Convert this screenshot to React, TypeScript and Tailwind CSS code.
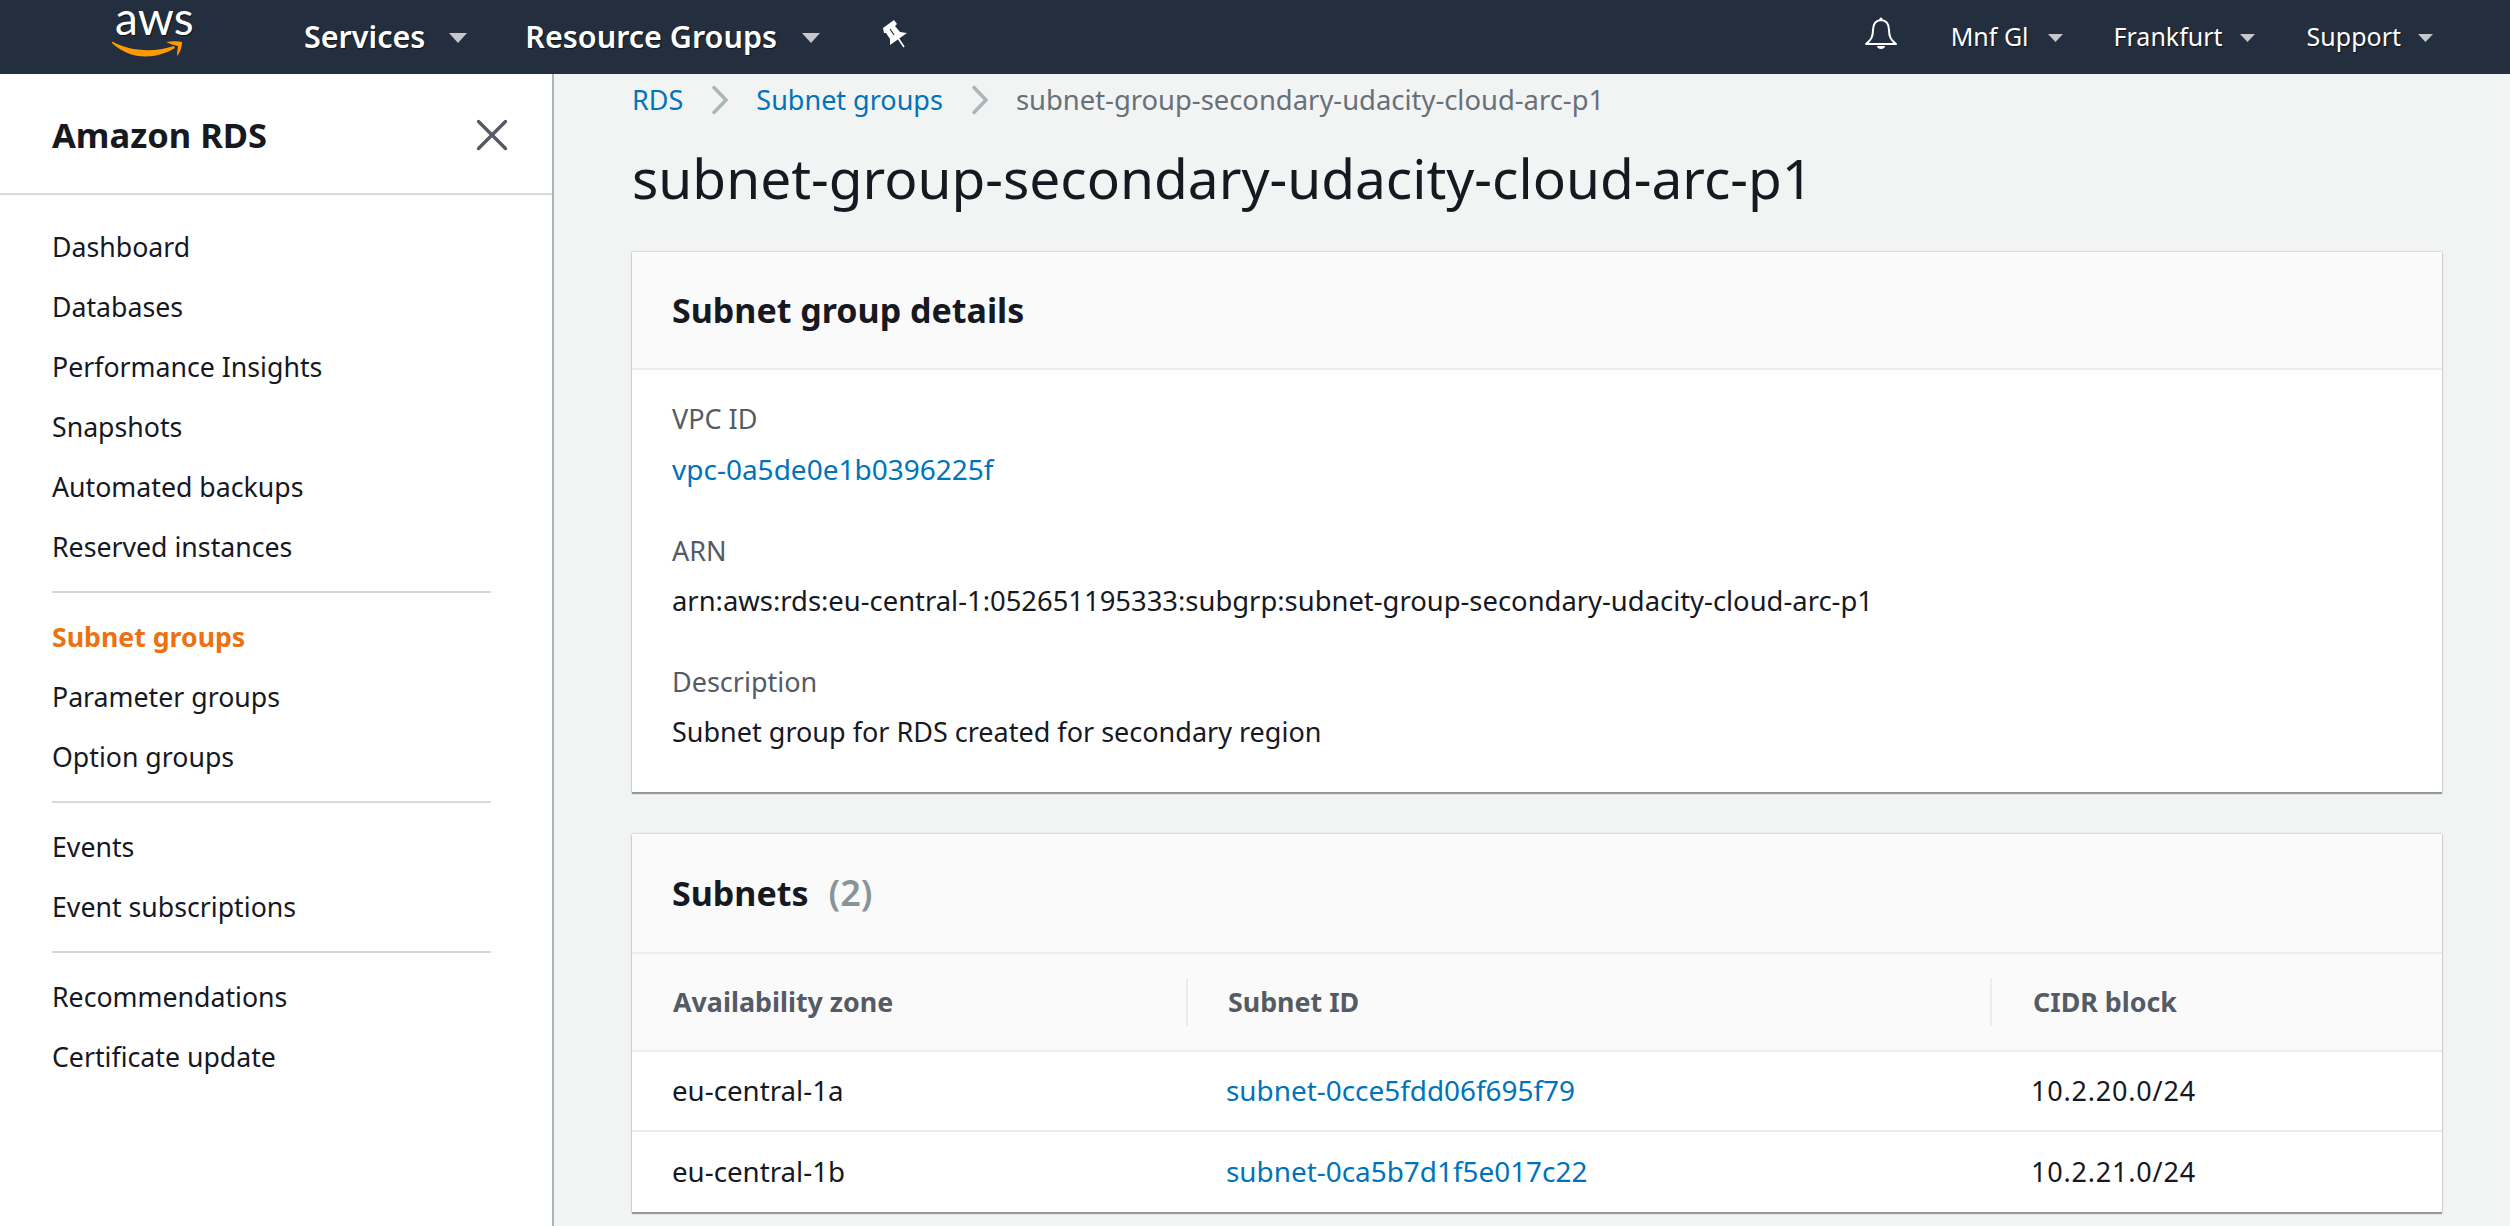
import { X } from 'lucide-react';

const font = "font-['Noto_Sans',sans-serif]";

const navGroups = [
  ['Dashboard', 'Databases', 'Performance Insights', 'Snapshots', 'Automated backups', 'Reserved instances'],
  ['Subnet groups', 'Parameter groups', 'Option groups'],
  ['Events', 'Event subscriptions'],
  ['Recommendations', 'Certificate update'],
];

const subnets = [
  { zone: 'eu-central-1a', id: 'subnet-0cce5fdd06f695f79', cidr: '10.2.20.0/24' },
  { zone: 'eu-central-1b', id: 'subnet-0ca5b7d1f5e017c22', cidr: '10.2.21.0/24' },
];

function Caret({ big }: { big?: boolean }) {
  return (
    <svg width={big ? 18 : 15} height={big ? 10 : 8} viewBox="0 0 14 8" preserveAspectRatio="none" className="mt-[2px] shrink-0">
      <path d="M0 0h14L7 8z" fill="#c4c8c9" />
    </svg>
  );
}

function AwsLogo() {
  return (
    <svg width="110" height="70" viewBox="0 0 110 70" className="mt-[-4px] shrink-0">
      <text x="15" y="35" fontFamily="Lato, sans-serif" fontSize="46" fill="#fff">
        aws
      </text>
      <path d="M12 41.500C30 51 52 53 74 46L75 48C55 60 30 60 12 43Z" fill="#f90" />
      <path d="M66 42C72 41 78 41 82 42C82 47 80 53 77 56C77 52 78 48 78 46C74 45 70 44 66 42Z" fill="#f90" />
    </svg>
  );
}

function Pin() {
  return (
    <svg width="28" height="30" viewBox="14 8 28 30" className="mt-[-8px] ml-[61px] shrink-0">
      <path d="M16 18L27 10L30 14L28 16L33 22L40 23L23 35L23 29L19 23L17 23Z" fill="#fff" />
      <path d="M31 28L37 37" stroke="#fff" strokeWidth="1.600" />
      <path d="M23 19L27 25" stroke="#232f3e" strokeWidth="1.200" />
    </svg>
  );
}

function BellIcon() {
  return (
    <svg width="36" height="36" viewBox="10 5 36 36" className="mt-[-8px] shrink-0">
      <circle cx="28" cy="9" r="1.600" fill="#fff" />
      <path d="M28 10C22 10.500 20 14 20 20C20 27 18 30 13 34H43C38 30 36 27 36 20C36 14 34 10.500 28 10Z" fill="none" stroke="#fff" strokeWidth="2" strokeLinejoin="round" />
      <path d="M24 36H32C32 40 24 40 24 36Z" fill="#fff" />
    </svg>
  );
}

function Chevron() {
  return (
    <svg width="17" height="30" viewBox="0 0 17 30" className="mx-[28px] shrink-0">
      <path d="M2 1.500L15 15L2 28.500" fill="none" stroke="#aab7b8" strokeWidth="3.500" />
    </svg>
  );
}

function TopBar() {
  return (
    <header className="flex h-[74px] shrink-0 items-center bg-[#232f3e] pr-[77px] pl-[100px] text-white [text-shadow:1px_1px_1px_#10151c]">
      <AwsLogo />
      <nav className="ml-[94px] flex items-center text-[30.5px] font-semibold">
        <span>Services</span>
        <span className="ml-[24px]"><Caret big /></span>
        <span className="ml-[58px]">Resource Groups</span>
        <span className="ml-[25px]"><Caret big /></span>
        <Pin />
      </nav>
      <div className="ml-auto flex items-center text-[25px]">
        <BellIcon />
        <span className="ml-[52px]">Mnf Gl</span>
        <span className="ml-[19px]"><Caret /></span>
        <span className="ml-[51px]">Frankfurt</span>
        <span className="ml-[17px]"><Caret /></span>
        <span className="ml-[52px]">Support</span>
        <span className="ml-[17px]"><Caret /></span>
      </div>
    </header>
  );
}

function Sidebar() {
  return (
    <aside className="w-[554px] shrink-0 border-r-2 border-[#aab7b8] bg-white">
      <div className="flex h-[121px] items-center justify-between border-b-2 border-[#d5dbdb] pt-[3px] pr-[33px] pl-[52px]">
        <h2 className="text-[34.5px] font-bold text-[#16191f]">Amazon RDS</h2>
        <X size={54} strokeWidth={1.5} className="text-[#545b64]" />
      </div>
      <nav className="pt-[22px] pr-[61px] pl-[52px]">
        {navGroups.map((group, i) => (
          <div key={i} className={i > 0 ? 'mt-[14px] border-t-2 border-[#d5dbdb] pt-[14px]' : ''}>
            {group.map((item) => (
              <div
                key={item}
                className={
                  item === 'Subnet groups'
                    ? 'flex h-[60px] items-center text-[26.7px] font-bold text-[#ec7211]'
                    : 'flex h-[60px] items-center text-[26.7px] text-[#16191f]'
                }
              >
                {item}
              </div>
            ))}
          </div>
        ))}
      </nav>
    </aside>
  );
}

function Field({ label, children }: { label: string; children: React.ReactNode }) {
  return (
    <div className="mb-[31px]">
      <div className="text-[27px] leading-[50px] text-[#545b64]">{label}</div>
      <div className="text-[27px] leading-[50px] text-[#16191f]">{children}</div>
    </div>
  );
}

function Card({ children }: { children: React.ReactNode }) {
  return <section className="bg-white shadow-[0_2px_1px_0_rgba(84,91,100,0.55),0_0_2px_0_rgba(0,28,36,0.3)]">{children}</section>;
}

export default function App() {
  return (
    <div className={`flex h-[1226px] flex-col overflow-hidden bg-[#f2f3f3] ${font}`}>
      <TopBar />
      <div className="flex min-h-0 flex-1">
        <Sidebar />
        <main className="flex-1 pt-[6px] pr-[68px] pl-[78px]">
          <div className="flex h-[40px] items-center text-[27px]">
            <span className="text-[#0073bb]">RDS</span>
            <Chevron />
            <span className="text-[#0073bb]">Subnet groups</span>
            <Chevron />
            <span className="text-[27.4px] text-[#687078]">subnet-group-secondary-udacity-cloud-arc-p1</span>
          </div>
          <h1 className="mt-[18px] text-[55px] leading-[80px] font-normal text-[#16191f]">
            subnet-group-secondary-udacity-cloud-arc-p1
          </h1>
          <div className="mt-[34px]">
            <Card>
              <div className="flex h-[118px] items-center border-b-2 border-[#eaeded] bg-[#fafafa] px-[40px]">
                <h2 className="text-[34px] font-bold text-[#16191f]">Subnet group details</h2>
              </div>
              <div className="px-[40px] pt-[24px] pb-[4px]">
                <Field label="VPC ID">
                  <span className="text-[28px] text-[#0073bb]">vpc-0a5de0e1b0396225f</span>
                </Field>
                <Field label="ARN">
                  <span className="text-[27.4px]">arn:aws:rds:eu-central-1:052651195333:subgrp:subnet-group-secondary-udacity-cloud-arc-p1</span>
                </Field>
                <Field label="Description">Subnet group for RDS created for secondary region</Field>
              </div>
            </Card>
          </div>
          <div className="mt-[42px]">
            <Card>
              <div className="flex h-[120px] items-center border-b-2 border-[#eaeded] bg-[#fafafa] px-[40px]">
                <h2 className="text-[34px] font-bold text-[#16191f]">Subnets</h2>
                <span className="ml-[20px] text-[36px] font-semibold text-[#879596]">(2)</span>
              </div>
              <div className="grid grid-cols-[554px_804px_1fr] items-center">
                <div className="col-span-3 grid h-[98px] grid-cols-subgrid items-center border-b-2 border-[#eaeded] bg-[#fafafa] text-[26.8px] font-bold text-[#545b64]">
                  <div className="pl-[41px]">Availability zone</div>
                  <div className="flex h-[48px] items-center border-l-2 border-[#eaeded] pl-[40px]">Subnet ID</div>
                  <div className="flex h-[48px] items-center border-l-2 border-[#eaeded] pl-[41px]">CIDR block</div>
                </div>
                {subnets.map((s, i) => (
                  <div
                    key={s.id}
                    className={`col-span-3 grid h-[80px] grid-cols-subgrid items-center text-[27.7px] text-[#16191f] ${i === 0 ? 'border-b-2 border-[#eaeded]' : ''}`}
                  >
                    <div className="pl-[40px]">{s.zone}</div>
                    <div className="pl-[40px] text-[27.9px] text-[#0073bb]">{s.id}</div>
                    <div className="pl-[41px] text-[27px] tracking-[0.8px]">{s.cidr}</div>
                  </div>
                ))}
              </div>
            </Card>
          </div>
        </main>
      </div>
    </div>
  );
}
